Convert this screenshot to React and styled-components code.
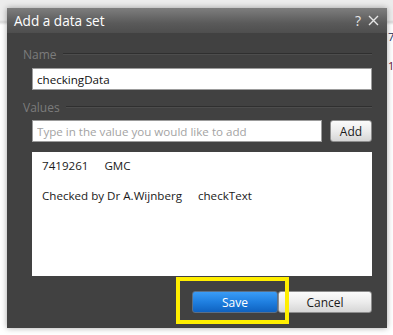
import React from "react";
import styled, { createGlobalStyle } from "styled-components";

const GlobalStyle = createGlobalStyle`
  html, body {
    margin: 0;
    padding: 0;
    background: #ffffff;
  }
  body {
    font-family: "Open Sans", "Noto Sans", sans-serif;
  }
`;

const Page = styled.div`
  position: relative;
  width: 393px;
  height: 335px;
  overflow: hidden;
  background: linear-gradient(
    to bottom,
    #ececec 0,
    #ececec 20px,
    #d8d8d8 22px,
    #ffffff 25px
  );
`;

const BackText = styled.span`
  position: absolute;
  left: 388px;
  top: ${(p) => p.$top}px;
  font-size: 11px;
  color: ${(p) => p.$color};
`;

const Dialog = styled.div`
  position: absolute;
  left: 7px;
  top: 8px;
  width: 380px;
  height: 320px;
  background: #414141;
  box-shadow: 0 0 6px rgba(0, 0, 0, 0.35);
  display: flex;
  flex-direction: column;
`;

const TitleBar = styled.div`
  height: 25px;
  display: flex;
  align-items: center;
  justify-content: space-between;
  padding: 0 8px 0 7px;
  background: linear-gradient(to bottom, #7e7e7e, #5a5a5a 60%, #4e4e4e);
  color: #ffffff;
  font-size: 13.6px;
`;

const TitleTools = styled.div`
  display: flex;
  align-items: center;
  gap: 7px;
  color: #e6e6e6;
  font-size: 14px;
`;

const Body = styled.div`
  flex: 1;
  display: flex;
  flex-direction: column;
  padding: 13px 15px 0 16px;
  font-size: 11.6px;
`;

const Legend = styled.div`
  display: flex;
  align-items: center;
  gap: 6px;
  color: #7c7c7c;
  font-size: 12px;
  height: 16px;
  &::after {
    content: "";
    flex: 1;
    height: 1px;
    background: #2f2f2f;
    border-bottom: 1px solid #4d4d4d;
  }
`;

const Field = styled.div`
  margin-top: ${(p) => p.$top}px;
  margin-bottom: ${(p) => p.$bottom}px;
  display: flex;
  gap: 8px;
`;

const TextInput = styled.input`
  flex: 1;
  min-width: 0;
  height: 22px;
  box-sizing: border-box;
  border: 1px solid #9c9c9c;
  background: #ffffff;
  padding: 0 4px;
  font-family: inherit;
  font-size: 11.6px;
  color: #111;
  outline: none;
  &::placeholder {
    color: #a3a3a3;
  }
`;

const Indent = styled.div`
  padding-left: 9px;
`;

const Button = styled.button`
  height: 22px;
  box-sizing: border-box;
  border-radius: 3px;
  font-family: inherit;
  font-size: 12px;
  padding: 0;
  cursor: pointer;
  width: ${(p) => p.$w}px;
  border: 1px solid ${(p) => (p.$primary ? "#5b6f86" : "#8d8d8d")};
  color: ${(p) => (p.$primary ? "#ffffff" : "#1a1a1a")};
  background: ${(p) =>
    p.$primary
      ? "linear-gradient(to bottom, #3a9cf6, #1f7fe0 50%, #0f62c0)"
      : "linear-gradient(to bottom, #fbfbfb, #ececec 50%, #d6d6d6)"};
`;

const List = styled.div`
  height: 124px;
  background: #ffffff;
  margin-top: 10px;
  padding: 4px 10px;
  box-sizing: border-box;
  display: flex;
  flex-direction: column;
  gap: 11px;
`;

const Row = styled.div`
  display: flex;
  gap: 16px;
  color: #1a1a1a;
  line-height: 19px;
`;

const Footer = styled.div`
  display: flex;
  justify-content: flex-end;
  margin-top: 15px;
`;

const Highlight = styled.div`
  position: relative;
  &::before {
    content: "";
    position: absolute;
    left: -16px;
    top: -14px;
    width: 113px;
    height: 47px;
    box-sizing: border-box;
    border: 4px solid #ffee00;
    pointer-events: none;
  }
`;

const CloseIcon = () => (
  <svg width="11" height="11" viewBox="0 0 11 11">
    <path d="M1 1 L10 10 M10 1 L1 10" stroke="#e6e6e6" strokeWidth="1.4" />
  </svg>
);

const rows = [
  ["7419261", "GMC"],
  ["Checked by Dr A.Wijnberg", "checkText"],
];

export default function App() {
  return (
    <Page>
      <GlobalStyle />
      <BackText $top={29} $color="#1b2b60">7</BackText>
      <BackText $top={58} $color="#6a1030">1</BackText>
      <Dialog>
        <TitleBar>
          <span>Add a data set</span>
          <TitleTools>
            <span>?</span>
            <CloseIcon />
          </TitleTools>
        </TitleBar>
        <Body>
          <Legend>Name</Legend>
          <Indent>
            <Field $top={6} $bottom={9}>
              <TextInput defaultValue="checkingData" />
            </Field>
          </Indent>
          <Legend>Values</Legend>
          <Indent>
            <Field $top={5} $bottom={0}>
              <TextInput placeholder="Type in the value you would like to add" />
              <Button $w={42}>Add</Button>
            </Field>
            <List>
              {rows.map(([a, b]) => (
                <Row key={a}>
                  <span>{a}</span>
                  <span>{b}</span>
                </Row>
              ))}
            </List>
            <Footer>
              <Highlight>
                <Button $primary $w={86}>Save</Button>
              </Highlight>
              <Button $w={94}>Cancel</Button>
            </Footer>
          </Indent>
        </Body>
      </Dialog>
    </Page>
  );
}
